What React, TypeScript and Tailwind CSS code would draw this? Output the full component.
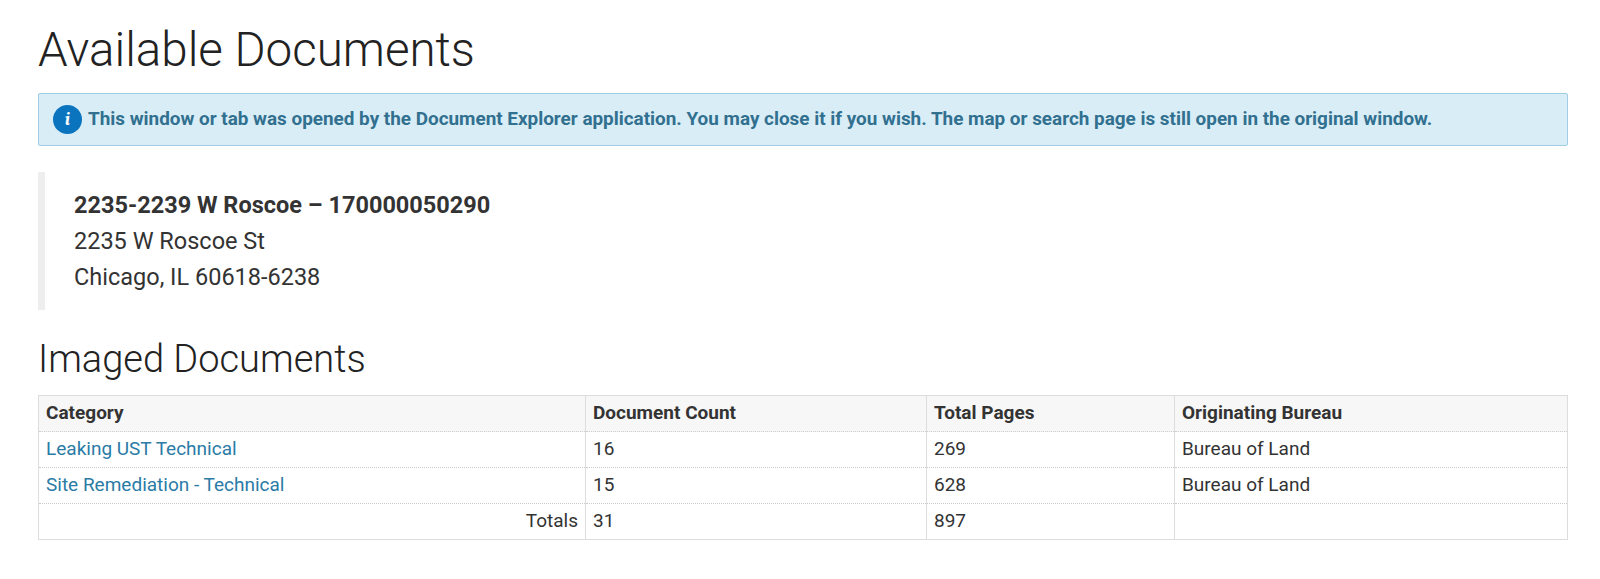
export default function App() {
  const rows = [
    ["Leaking UST Technical", "16", "269", "Bureau of Land"],
    ["Site Remediation - Technical", "15", "628", "Bureau of Land"],
  ];
  const td = "px-[7px] h-[36px] border-l border-[#dddddd] first:border-l-0 align-middle";
  return (
    <div className="pl-[38px] pr-[32px] pt-[20px] text-[#333333]" style={{ fontFamily: "Roboto, sans-serif" }}>
      <h1 className="text-[47.5px] font-light leading-[60px] text-[#222]">Available Documents</h1>
      <div className="mt-[13px] h-[53px] flex items-center gap-[6px] px-[14px] bg-[#d9edf7] border border-[#9fcde3] rounded-[2px] text-[#31708f] font-bold text-[18.9px] whitespace-nowrap">
        <span className="w-[29px] h-[29px] rounded-full bg-[#0a74bf] text-white flex items-center justify-center font-serif italic text-[18px]">i</span>
        This window or tab was opened by the Document Explorer application. You may close it if you wish. The map or search page is still open in the original window.
      </div>
      <div className="mt-[26px] border-l-[7px] border-[#eeeeee] pl-[29px] py-[15px] text-[23.5px] leading-[36px]">
        <div className="font-bold">2235-2239 W Roscoe – 170000050290</div>
        <div>2235 W Roscoe St</div>
        <div>Chicago, IL 60618-6238</div>
      </div>
      <h2 className="mt-[24px] text-[38px] font-light leading-[50px] text-[#222]">Imaged Documents</h2>
      <table className="mt-[11px] w-full border border-[#dddddd] border-collapse text-[19px]">
        <colgroup>
          <col style={{ width: 547 }} />
          <col style={{ width: 341 }} />
          <col style={{ width: 248 }} />
          <col />
        </colgroup>
        <thead>
          <tr className="bg-[#f7f7f7] font-bold text-left">
            {["Category", "Document Count", "Total Pages", "Originating Bureau"].map((h) => (
              <th key={h} className={td}>{h}</th>
            ))}
          </tr>
        </thead>
        <tbody>
          {rows.map((r) => (
            <tr key={r[0]} className="border-t border-dotted border-[#cccccc]">
              <td className={td}><a className="text-[#2a7ba6]">{r[0]}</a></td>
              <td className={td}>{r[1]}</td>
              <td className={td}>{r[2]}</td>
              <td className={td}>{r[3]}</td>
            </tr>
          ))}
          <tr className="border-t border-dotted border-[#cccccc]">
            <td className={td + " text-right"}>Totals</td>
            <td className={td}>31</td>
            <td className={td}>897</td>
            <td className={td}></td>
          </tr>
        </tbody>
      </table>
    </div>
  );
}
